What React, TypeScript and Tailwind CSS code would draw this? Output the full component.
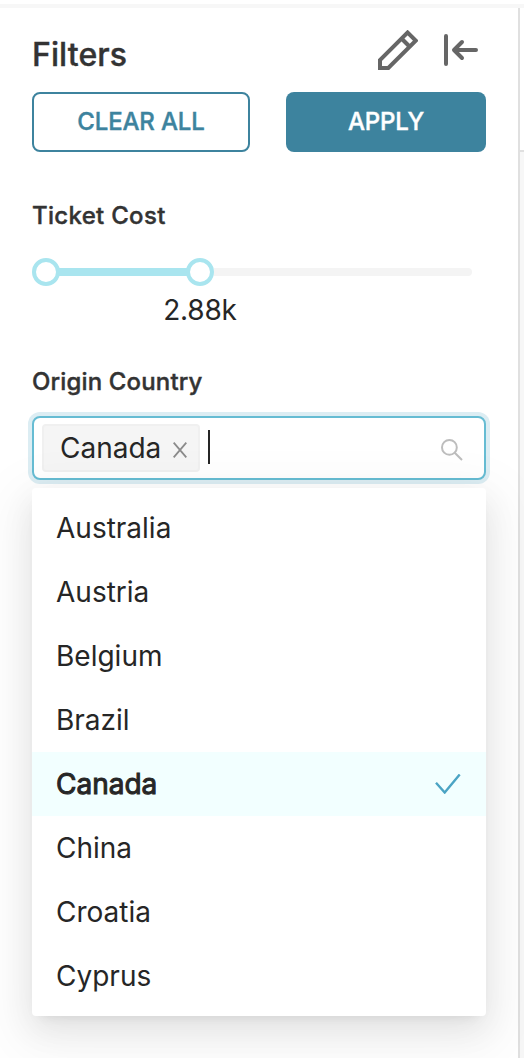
const countries = ['Australia', 'Austria', 'Belgium', 'Brazil', 'Canada', 'China', 'Croatia', 'Cyprus'];

function EditIcon() {
  return (
    <svg width="40" height="40" viewBox="0 0 40 40" fill="none" stroke="#666666" strokeWidth="4" strokeLinejoin="round">
      <path d="M2 30.1V38H10.3L37.7 10.6L29.6 2.5Z" strokeLinejoin="miter" />
      <path d="M23.5 8.5L31.5 16.5" />
    </svg>
  );
}

function CollapseIcon() {
  return (
    <svg width="36" height="32" viewBox="0 0 36 32" fill="none" stroke="#666666" strokeWidth="4" strokeLinecap="round" strokeLinejoin="round">
      <path d="M2 2V30M32 16H11M18 8L10 16L18 24" />
    </svg>
  );
}

function Header() {
  return (
    <div className="flex h-[84px] items-start justify-between pt-[22px]">
      <h1 className="mt-[5px] text-[32px] leading-[40px] font-medium tracking-[0.1px] [-webkit-text-stroke:0.4px_#333333]">Filters</h1>
      <div className="mr-[6px] flex items-center gap-[26px]">
        <EditIcon />
        <CollapseIcon />
      </div>
    </div>
  );
}

function CostSlider() {
  return (
    <div className="mt-[26px]">
      <div className="mr-[14px] grid h-[28px] grid-cols-[28px_126px_28px_1fr] items-center">
        <span className="size-7 rounded-full border-4 border-[#a9e5ef] bg-white" />
        <span className="-mx-px h-2 bg-[#a9e5ef]" />
        <span className="size-7 rounded-full border-4 border-[#a9e5ef] bg-white" />
        <span className="h-2 rounded-r bg-[#f4f4f4]" />
      </div>
      <div className="mt-[6px] w-[336px] text-center text-[28px] leading-[36px] tracking-[-0.2px] text-[#262626]">2.88k</div>
    </div>
  );
}

function CountrySelect() {
  return (
    <div>
      <div className="mt-[18px] flex h-16 items-center rounded-lg border-2 border-[#66bcd3] bg-white pr-[21px] pl-2 shadow-[0_0_0_4px_#dcedf3]">
        <div className="flex h-12 w-[158px] items-center rounded-[4px] border-2 border-[#f0f0f0] bg-[#f5f5f5] pl-4">
          <span className="text-[28px] text-[#262626]">Canada</span>
          <svg className="mt-1 ml-auto mr-[11px]" width="14" height="16" viewBox="0 0 14 16" fill="none" stroke="#8b8b8b" strokeWidth="1.8">
            <path d="M.7.7L13.3 15.3M13.3.7L.7 15.3" />
          </svg>
        </div>
        <span className="ml-2 mb-[3px] h-[34px] w-[2px] bg-[#262626]" />
        <svg className="mt-1 ml-auto" width="22" height="22" viewBox="0 0 22 22" fill="none" stroke="#bdbdbd" strokeWidth="2">
          <circle cx="8.4" cy="8.4" r="7.4" />
          <path d="M13.7 13.7L21 21" />
        </svg>
      </div>
      <ul className="relative mt-2 h-[528px] rounded-[4px] bg-white py-2 shadow-[0_6px_12px_-8px_rgba(0,0,0,0.12),0_12px_32px_0_rgba(0,0,0,0.08),0_18px_56px_16px_rgba(0,0,0,0.05)]">
        {countries.map((name) =>
          name === 'Canada' ? (
            <li key={name} className="flex h-16 items-center justify-between bg-[#f2ffff] pr-[25px] pl-6 text-[28px] text-[#262626] [-webkit-text-stroke:1px_#262626]">
              {name}
              <svg width="26" height="20" viewBox="0 0 26 20" fill="none" stroke="#4ba4c4" strokeWidth="2.4">
                <path d="M1 8.7L9.7 18.5L24.7.5" />
              </svg>
            </li>
          ) : (
            <li key={name} className="flex h-16 items-center px-6 text-[28px] text-[#262626]">
              {name}
            </li>
          )
        )}
      </ul>
    </div>
  );
}

export default function App() {
  return (
    <div className="h-[1058px] w-[524px] overflow-hidden bg-white pt-1 font-['Inter',sans-serif] text-[#333333]">
      <div className="h-1 bg-[#f7f7f7]" />
      <div className="flex h-[1050px]">
        <aside className="relative z-10 w-[520px] shrink-0 border-r-2 border-[#e0e0e0] pr-8 pl-8">
          <Header />
          <div className="flex justify-between text-[24px] font-medium tracking-[-0.15px]">
            <button className="h-[60px] w-[218px] rounded-lg border-2 border-[#3d839e] text-[#3d839e] [-webkit-text-stroke:0.4px_#3d839e]">CLEAR ALL</button>
            <button className="h-[60px] w-[200px] rounded-lg bg-[#3d839e] text-white [-webkit-text-stroke:0.4px_#ffffff]">APPLY</button>
          </div>
          <h2 className="mt-[48px] text-[24px] leading-[32px] font-medium tracking-[0.3px] [-webkit-text-stroke:0.4px_#333333]">Ticket Cost</h2>
          <CostSlider />
          <h2 className="mt-[38px] text-[24px] leading-[32px] font-medium tracking-[0.15px] [-webkit-text-stroke:0.4px_#333333]">Origin Country</h2>
          <CountrySelect />
        </aside>
        <div className="flex-1 bg-[#f7f7f7]">
          <div className="h-[144px] border-b-2 border-[#e0e0e0] bg-white" />
        </div>
      </div>
    </div>
  );
}
